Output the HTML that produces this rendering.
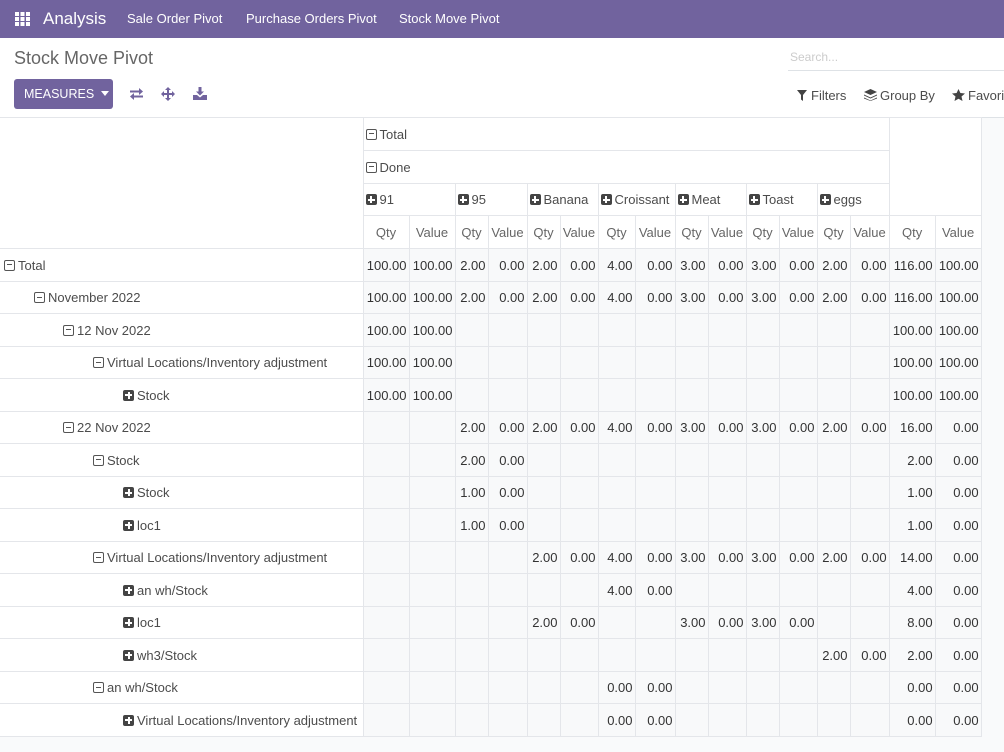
<!DOCTYPE html>
<html><head><meta charset="utf-8"><style>
*{box-sizing:border-box;margin:0;padding:0}
body{width:1004px;height:752px;overflow:hidden;background:#f9fafb;font-family:"Liberation Sans",sans-serif;font-size:13px;color:#4c4c4c;position:relative}
.nav{position:absolute;left:0;top:0;width:1004px;height:38px;background:#71639e;color:#fff}
.nav span{position:absolute;top:11px;font-size:13px}
.cp{position:absolute;left:0;top:38px;width:1004px;height:80px;background:#fff;border-bottom:1px solid #dee2e6}
.title{position:absolute;left:14px;top:10px;font-size:18px;color:#666}
.search{position:absolute;left:788px;top:9px;width:216px;height:24px;border-bottom:1px solid #dee2e6;color:#ccc;font-size:12px;padding-left:2px;padding-top:3px}
.meas{position:absolute;left:14px;top:41px;width:99px;height:30px;background:#71639e;color:#fff;border-radius:3px;font-size:12.5px;padding:8px 0 0 10px}
.right span{position:absolute;top:50px;font-size:13px;color:#4c4c4c}
table{position:absolute;left:0;top:117px;width:981px;border-collapse:collapse;table-layout:fixed;background:#fff}
td,th{border:1px solid #e4e6ea;font-weight:normal;white-space:nowrap;overflow:hidden;padding:0 2px;text-align:right}
th{text-align:left;background:#fff}
td{background:#f8f9fa;color:#333}
.qh th{text-align:center;color:#666}
.rh{text-align:left;background:#fff;color:#4c4c4c;padding-left:4px;border-left:none}
.mi,.pl{display:inline-block;width:11px;height:11px;vertical-align:-1px;margin-right:3px;position:relative;border-radius:2px}
.mi{border:1.3px solid #555}
.mi:after{content:"";position:absolute;left:2px;right:2px;top:3.5px;height:1.3px;background:#555}
.pl{background:#444}
.pl:before{content:"";position:absolute;left:2px;right:2px;top:4.5px;height:2px;background:#fff}
.pl:after{content:"";position:absolute;top:2px;bottom:2px;left:4.5px;width:2px;background:#fff}
</style></head><body>
<div class="nav">
<svg style="position:absolute;left:15px;top:12px" width="15" height="14" viewBox="0 0 15 14" fill="#fff"><rect x="0" y="0" width="4" height="4"/><rect x="5.5" y="0" width="4" height="4"/><rect x="11" y="0" width="4" height="4"/><rect x="0" y="5" width="4" height="4"/><rect x="5.5" y="5" width="4" height="4"/><rect x="11" y="5" width="4" height="4"/><rect x="0" y="10" width="4" height="4"/><rect x="5.5" y="10" width="4" height="4"/><rect x="11" y="10" width="4" height="4"/></svg>
<span style="left:43px;top:9px;font-size:17px">Analysis</span>
<span style="left:127px">Sale Order Pivot</span>
<span style="left:246px">Purchase Orders Pivot</span>
<span style="left:399px">Stock Move Pivot</span>
</div>
<div class="cp">
<div class="title">Stock Move Pivot</div>
<div class="search">Search...</div>
<div class="meas">MEASURES <span style="display:inline-block;border-left:4px solid transparent;border-right:4px solid transparent;border-top:5px solid #fff;vertical-align:2px;margin-left:3px"></span></div>
<svg style="position:absolute;left:129px;top:50px" width="15" height="12" viewBox="0 0 15 12" fill="#71639e"><rect x="1" y="2.5" width="10" height="2"/><path d="M10 0 L14 3.5 L10 7z"/><rect x="4" y="7.5" width="10" height="2"/><path d="M5 5 L1 8.5 L5 12z"/></svg>
<svg style="position:absolute;left:161px;top:49px" width="14" height="14" viewBox="0 0 14 14" fill="#71639e"><rect x="6" y="2" width="2" height="10"/><rect x="2" y="6" width="10" height="2"/><path d="M7 0 L10 3 L4 3z M7 14 L10 11 L4 11z M0 7 L3 4 L3 10z M14 7 L11 4 L11 10z"/></svg>
<svg style="position:absolute;left:193px;top:49px" width="14" height="13" viewBox="0 0 14 13" fill="#71639e"><rect x="5.5" y="0" width="3" height="5"/><path d="M3 4.5 L11 4.5 L7 8.5z"/><path d="M0 8 L4 8 L7 10.5 L10 8 L14 8 L14 13 L0 13z"/></svg>
<div class="right">
<svg style="position:absolute;left:797px;top:52px" width="10" height="11" viewBox="0 0 10 11" fill="#444"><path d="M0 0 L10 0 L6 5 L6 11 L4 9.5 L4 5z"/></svg><span style="left:811px">Filters</span>
<svg style="position:absolute;left:864px;top:51px" width="13" height="12" viewBox="0 0 13 12" fill="#444"><path d="M6.5 0 L13 3 L6.5 6 L0 3z M0 5.5 L6.5 8.5 L13 5.5 L13 6.5 L6.5 9.5 L0 6.5z M0 8.5 L6.5 11.5 L13 8.5 L13 9.5 L6.5 12 L0 9.5z"/></svg><span style="left:880px">Group By</span>
<svg style="position:absolute;left:952px;top:51px" width="13" height="12" viewBox="0 0 13 12" fill="#444"><path d="M6.5 0 L8.4 4 L13 4.5 L9.5 7.5 L10.5 12 L6.5 9.7 L2.5 12 L3.5 7.5 L0 4.5 L4.6 4z"/></svg><span style="left:968px">Favorites</span>
</div>
</div>
<table>
<colgroup><col style="width:363px"><col style="width:46px"><col style="width:46px"><col style="width:33px"><col style="width:39px"><col style="width:33px"><col style="width:38px"><col style="width:37px"><col style="width:40px"><col style="width:33px"><col style="width:38px"><col style="width:33px"><col style="width:38px"><col style="width:33px"><col style="width:39px"><col style="width:46px"><col style="width:46px"></colgroup>
<tr style="height:33px"><th rowspan="4" style="border-left:none"></th><th colspan="14"><span class="mi"></span>Total</th><th colspan="2" rowspan="3"></th></tr>
<tr style="height:33px"><th colspan="14"><span class="mi"></span>Done</th></tr>
<tr style="height:32px"><th colspan="2"><span class="pl"></span>91</th><th colspan="2"><span class="pl"></span>95</th><th colspan="2"><span class="pl"></span>Banana</th><th colspan="2"><span class="pl"></span>Croissant</th><th colspan="2"><span class="pl"></span>Meat</th><th colspan="2"><span class="pl"></span>Toast</th><th colspan="2"><span class="pl"></span>eggs</th></tr>
<tr class="qh" style="height:33px"><th>Qty</th><th>Value</th><th>Qty</th><th>Value</th><th>Qty</th><th>Value</th><th>Qty</th><th>Value</th><th>Qty</th><th>Value</th><th>Qty</th><th>Value</th><th>Qty</th><th>Value</th><th>Qty</th><th>Value</th></tr>
<tr style="height:33px"><th class="rh"><span class="mi"></span>Total</th><td>100.00</td><td>100.00</td><td>2.00</td><td>0.00</td><td>2.00</td><td>0.00</td><td>4.00</td><td>0.00</td><td>3.00</td><td>0.00</td><td>3.00</td><td>0.00</td><td>2.00</td><td>0.00</td><td>116.00</td><td>100.00</td></tr>
<tr style="height:32px"><th class="rh" style="padding-left:34px"><span class="mi"></span>November 2022</th><td>100.00</td><td>100.00</td><td>2.00</td><td>0.00</td><td>2.00</td><td>0.00</td><td>4.00</td><td>0.00</td><td>3.00</td><td>0.00</td><td>3.00</td><td>0.00</td><td>2.00</td><td>0.00</td><td>116.00</td><td>100.00</td></tr>
<tr style="height:33px"><th class="rh" style="padding-left:63px"><span class="mi"></span>12 Nov 2022</th><td>100.00</td><td>100.00</td><td></td><td></td><td></td><td></td><td></td><td></td><td></td><td></td><td></td><td></td><td></td><td></td><td>100.00</td><td>100.00</td></tr>
<tr style="height:32px"><th class="rh" style="padding-left:93px"><span class="mi"></span>Virtual Locations/Inventory adjustment</th><td>100.00</td><td>100.00</td><td></td><td></td><td></td><td></td><td></td><td></td><td></td><td></td><td></td><td></td><td></td><td></td><td>100.00</td><td>100.00</td></tr>
<tr style="height:33px"><th class="rh" style="padding-left:123px"><span class="pl"></span>Stock</th><td>100.00</td><td>100.00</td><td></td><td></td><td></td><td></td><td></td><td></td><td></td><td></td><td></td><td></td><td></td><td></td><td>100.00</td><td>100.00</td></tr>
<tr style="height:32px"><th class="rh" style="padding-left:63px"><span class="mi"></span>22 Nov 2022</th><td></td><td></td><td>2.00</td><td>0.00</td><td>2.00</td><td>0.00</td><td>4.00</td><td>0.00</td><td>3.00</td><td>0.00</td><td>3.00</td><td>0.00</td><td>2.00</td><td>0.00</td><td>16.00</td><td>0.00</td></tr>
<tr style="height:33px"><th class="rh" style="padding-left:93px"><span class="mi"></span>Stock</th><td></td><td></td><td>2.00</td><td>0.00</td><td></td><td></td><td></td><td></td><td></td><td></td><td></td><td></td><td></td><td></td><td>2.00</td><td>0.00</td></tr>
<tr style="height:32px"><th class="rh" style="padding-left:123px"><span class="pl"></span>Stock</th><td></td><td></td><td>1.00</td><td>0.00</td><td></td><td></td><td></td><td></td><td></td><td></td><td></td><td></td><td></td><td></td><td>1.00</td><td>0.00</td></tr>
<tr style="height:33px"><th class="rh" style="padding-left:123px"><span class="pl"></span>loc1</th><td></td><td></td><td>1.00</td><td>0.00</td><td></td><td></td><td></td><td></td><td></td><td></td><td></td><td></td><td></td><td></td><td>1.00</td><td>0.00</td></tr>
<tr style="height:32px"><th class="rh" style="padding-left:93px"><span class="mi"></span>Virtual Locations/Inventory adjustment</th><td></td><td></td><td></td><td></td><td>2.00</td><td>0.00</td><td>4.00</td><td>0.00</td><td>3.00</td><td>0.00</td><td>3.00</td><td>0.00</td><td>2.00</td><td>0.00</td><td>14.00</td><td>0.00</td></tr>
<tr style="height:33px"><th class="rh" style="padding-left:123px"><span class="pl"></span>an wh/Stock</th><td></td><td></td><td></td><td></td><td></td><td></td><td>4.00</td><td>0.00</td><td></td><td></td><td></td><td></td><td></td><td></td><td>4.00</td><td>0.00</td></tr>
<tr style="height:32px"><th class="rh" style="padding-left:123px"><span class="pl"></span>loc1</th><td></td><td></td><td></td><td></td><td>2.00</td><td>0.00</td><td></td><td></td><td>3.00</td><td>0.00</td><td>3.00</td><td>0.00</td><td></td><td></td><td>8.00</td><td>0.00</td></tr>
<tr style="height:33px"><th class="rh" style="padding-left:123px"><span class="pl"></span>wh3/Stock</th><td></td><td></td><td></td><td></td><td></td><td></td><td></td><td></td><td></td><td></td><td></td><td></td><td>2.00</td><td>0.00</td><td>2.00</td><td>0.00</td></tr>
<tr style="height:32px"><th class="rh" style="padding-left:93px"><span class="mi"></span>an wh/Stock</th><td></td><td></td><td></td><td></td><td></td><td></td><td>0.00</td><td>0.00</td><td></td><td></td><td></td><td></td><td></td><td></td><td>0.00</td><td>0.00</td></tr>
<tr style="height:33px"><th class="rh" style="padding-left:123px"><span class="pl"></span>Virtual Locations/Inventory adjustment</th><td></td><td></td><td></td><td></td><td></td><td></td><td>0.00</td><td>0.00</td><td></td><td></td><td></td><td></td><td></td><td></td><td>0.00</td><td>0.00</td></tr>
</table>
</body></html>
